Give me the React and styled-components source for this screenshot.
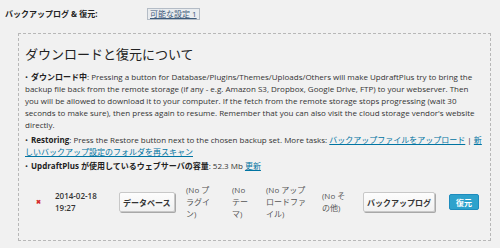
import React from "react";
import styled, { createGlobalStyle } from "styled-components";

const GlobalStyle = createGlobalStyle`
  html, body { margin: 0; padding: 0; background: #f1f1f1; }
  body {
    font-family: "Open Sans", "Noto Sans CJK JP", sans-serif;
    color: #333;
  }
`;

const Page = styled.div`
  width: 500px;
  height: 248px;
  box-sizing: border-box;
  padding: 6px 0 0 5px;
  overflow: hidden;
`;

const TopRow = styled.div`
  display: flex;
  align-items: center;
  height: 15px;
`;

const TopLabel = styled.div`
  width: 142px;
  font-size: 8px;
  font-weight: 700;
  color: #222;
`;

const SettingLink = styled.a`
  font-size: 8px;
  line-height: 10px;
  color: #3d5a7a;
  text-decoration: underline;
  border: 1px solid #b4bcc6;
  background: #e9ecef;
  padding: 0 2px;
`;

const Box = styled.div`
  margin: 12px 0 0 13px;
  width: 473px;
  height: 208px;
  box-sizing: border-box;
  border: 1px dashed #b8b8b8;
  padding: 0 6px;
`;

const Heading = styled.h3`
  margin: 12px 0 9px;
  font-size: 13px;
  line-height: 16px;
  font-weight: 400;
  color: #222;
`;

const List = styled.ul`
  list-style: none;
  margin: 0;
  padding: 0;
  font-size: 8px;
  line-height: 12px;
`;

const Item = styled.li`
  margin-bottom: 2.5px;
  &::before {
    content: "•";
    margin-right: 3px;
  }
`;

const Strong = styled.strong`
  font-weight: 700;
  color: #222;
`;

const Link = styled.a`
  color: #0074a2;
  text-decoration: underline;
`;

const Row = styled.div`
  display: flex;
  align-items: center;
  margin-top: 12px;
  font-size: 8px;
  line-height: 12px;
`;

const Cell = styled.div`
  width: ${(p) => p.$w}px;
  flex: none;
  display: flex;
  align-items: center;
`;

const DateText = styled.div`
  font-weight: 600;
  color: #333;
`;

const RedX = styled.span`
  color: #d42a2a;
  font-size: 6px;
  font-weight: 700;
  margin-left: 11px;
`;

const Note = styled.div`
  color: #555;
  white-space: nowrap;
`;

const Button = styled.button`
  font-family: inherit;
  font-size: 8px;
  font-weight: 600;
  height: 20px;
  padding: 0 3px;
  border: 1px solid #c8c8c8;
  border-radius: 2px;
  background: linear-gradient(#fdfdfd, #f1f1f1);
  box-shadow: 1px 1px 0 #a8a8a8;
  color: #333;
`;

const PrimaryButton = styled.button`
  font-family: inherit;
  font-size: 8px;
  font-weight: 600;
  height: 16px;
  padding: 0 6px;
  border: 1px solid #1e8cbe;
  border-radius: 2px;
  background: #2ea2cc;
  color: #fff;
`;

export default function App() {
  return (
    <>
      <GlobalStyle />
      <Page>
        <TopRow>
          <TopLabel>バックアップログ &amp; 復元:</TopLabel>
          <SettingLink>可能な設定 1</SettingLink>
        </TopRow>
        <Box>
          <Heading>ダウンロードと復元について</Heading>
          <List>
            <Item>
              <Strong>ダウンロード中</Strong>: Pressing a button for Database/Plugins/Themes/Uploads/Others will make UpdraftPlus try to bring the backup file back from the remote storage (if any - e.g. Amazon S3, Dropbox, Google Drive, FTP) to your webserver. Then you will be allowed to download it to your computer. If the fetch from the remote storage stops progressing (wait 30 seconds to make sure), then press again to resume. Remember that you can also visit the cloud storage vendor's website directly.
            </Item>
            <Item>
              <Strong>Restoring</Strong>: Press the Restore button next to the chosen backup set. More tasks: <Link>バックアップファイルをアップロード</Link> | <Link>新しいバックアップ設定のフォルダを再スキャン</Link>
            </Item>
            <Item>
              <Strong>UpdraftPlus が使用しているウェブサーバの容量</Strong>: 52.3 Mb <Link>更新</Link>
            </Item>
          </List>
          <Row>
            <Cell $w={30}><RedX>✖</RedX></Cell>
            <Cell $w={64}><DateText>2014-02-18<br />19:27</DateText></Cell>
            <Cell $w={67}><Button>データベース</Button></Cell>
            <Cell $w={46}><Note>(No プ<br />ラグイ<br />ン)</Note></Cell>
            <Cell $w={34}><Note>(No<br />テー<br />マ)</Note></Cell>
            <Cell $w={56}><Note>(No アップ<br />ロードファ<br />イル)</Note></Cell>
            <Cell $w={41}><Note>(No そ<br />の他)</Note></Cell>
            <Cell $w={86}><Button>バックアップログ</Button></Cell>
            <Cell $w={36}><PrimaryButton>復元</PrimaryButton></Cell>
          </Row>
        </Box>
      </Page>
    </>
  );
}
